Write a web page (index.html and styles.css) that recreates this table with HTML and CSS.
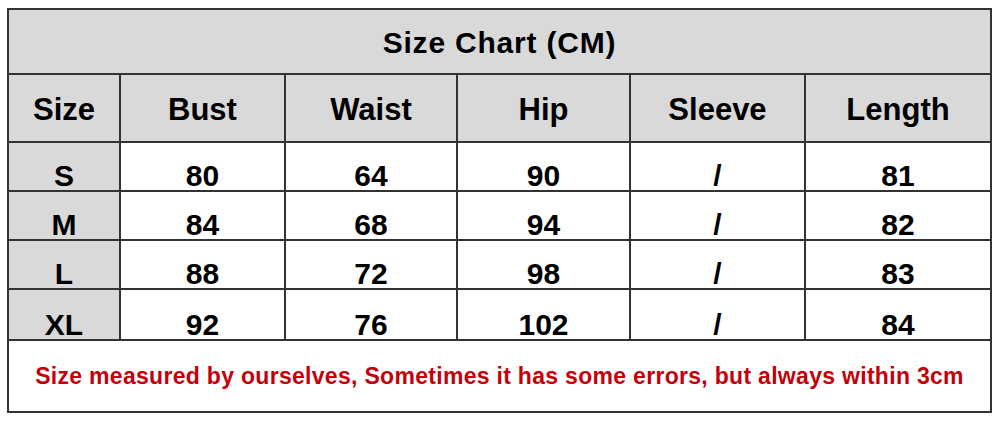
FILE: index.html
```html
<!DOCTYPE html>
<html lang="en">
<head>
<meta charset="utf-8">
<title>Size Chart</title>
<link rel="stylesheet" href="styles.css">
</head>
<body>
<div class="chart">
  <div class="cell title">Size Chart (CM)</div>

  <div class="cell head">Size</div>
  <div class="cell head">Bust</div>
  <div class="cell head">Waist</div>
  <div class="cell head">Hip</div>
  <div class="cell head">Sleeve</div>
  <div class="cell head">Length</div>

  <div class="cell size">S</div>
  <div class="cell data">80</div>
  <div class="cell data">64</div>
  <div class="cell data">90</div>
  <div class="cell data">/</div>
  <div class="cell data">81</div>

  <div class="cell size">M</div>
  <div class="cell data">84</div>
  <div class="cell data">68</div>
  <div class="cell data">94</div>
  <div class="cell data">/</div>
  <div class="cell data">82</div>

  <div class="cell size">L</div>
  <div class="cell data">88</div>
  <div class="cell data">72</div>
  <div class="cell data">98</div>
  <div class="cell data">/</div>
  <div class="cell data">83</div>

  <div class="cell size">XL</div>
  <div class="cell data">92</div>
  <div class="cell data">76</div>
  <div class="cell data">102</div>
  <div class="cell data">/</div>
  <div class="cell data">84</div>

  <div class="cell note">Size measured by ourselves, Sometimes it has some errors, but always within 3cm</div>
</div>
</body>
</html>
```

FILE: styles.css
```css
html, body {
  margin: 0;
  padding: 0;
  background: #ffffff;
}

body {
  padding: 8px 0 0 7px;
  font-family: "Liberation Sans", Arial, sans-serif;
  font-weight: bold;
  color: #000;
}

.chart {
  display: grid;
  width: 981px;
  grid-template-columns: 110px 163px 170px 171px 173px 184px;
  grid-template-rows: 63px 66px 47px 47px 47px 49px 70px;
  gap: 2px;
  padding: 2px;
  background: #333333;
}

.cell {
  display: flex;
  justify-content: center;
  align-items: center;
  background: #ffffff;
  white-space: nowrap;
}

.title {
  grid-column: 1 / -1;
  background: #d9d9d9;
  font-size: 30px;
  letter-spacing: 0.8px;
  padding-top: 3px;
}

.head {
  background: #d9d9d9;
  font-size: 31px;
  padding-top: 3px;
}

.size,
.data {
  font-size: 30px;
  line-height: 26px;
  align-items: flex-end;
  padding-bottom: 1px;
}

.size {
  background: #d9d9d9;
}

.note {
  grid-column: 1 / -1;
  color: #c4000a;
  font-size: 23px;
  letter-spacing: 0.3px;
}
```
